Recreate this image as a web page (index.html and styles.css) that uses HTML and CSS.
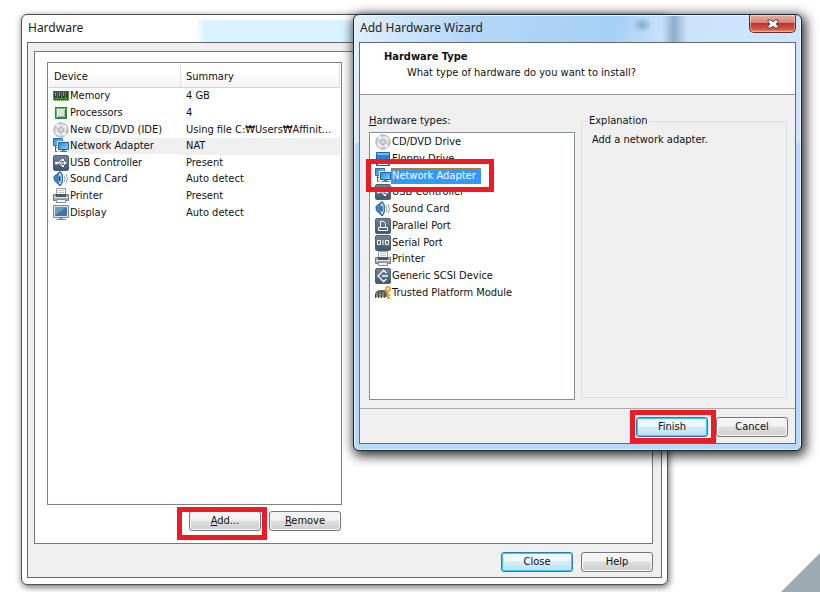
FILE: index.html
```html
<!DOCTYPE html>
<html lang="en">
  <head>
    <meta charset="UTF-8" />
    <meta name="viewport" content="width=device-width, initial-scale=1.0" />
    <title>Add Hardware Wizard</title>
    <link rel="stylesheet" href="styles.css">
  </head>
  <body>
    <svg class="sprite" aria-hidden="true">
      <defs>
        <linearGradient id="g-slate" x1="0" y1="0" x2="0" y2="1">
          <stop offset="0" stop-color="#71869a" />
          <stop offset="1" stop-color="#40566c" />
        </linearGradient>
        <linearGradient id="g-screen" x1="0" y1="0" x2="1" y2="1">
          <stop offset="0" stop-color="#2d83cf" />
          <stop offset="1" stop-color="#8bd0fa" />
        </linearGradient>
        <linearGradient id="g-disc" x1="0" y1="0" x2="1" y2="1">
          <stop offset="0" stop-color="#aeb4bd" />
          <stop offset="0.5" stop-color="#eef0f3" />
          <stop offset="1" stop-color="#a7adb6" />
        </linearGradient>
      </defs>
      <symbol id="memory" viewBox="0 0 16 16">
        <path fill="#35a046" d="M0 3h16v9h-1v1H1v-1H0z" />
        <path fill="#17722b" d="M0 3h16v1H0zM0 11h16v1H0z" />
        <path fill="#333b36" d="M1 4h3v6H1zM5 4h3v6H5zM9 4h3v6H9zM13 4h2v6h-2z" />
        <path fill="#8d9990" d="M2 4h1v4H2zM6 4h1v4H6zM10 4h1v4h-1z" />
        <path stroke="#b5d879" stroke-dasharray="1 1" d="M1 12.5h14" />
      </symbol>
      <symbol id="processor" viewBox="0 0 16 16">
        <path fill="#238944" d="M2 2h12v12H2z" />
        <path fill="#5abc69" d="M3 3h10v1H4v9H3z" />
        <path fill="#dcdfdd" d="M4 4h8v8H4z" />
        <path fill="#aeb7b1" d="M5 11h6V5h1v7H5z" />
        <path fill="#fff" d="M4 4h8v1H5v7H4z" />
      </symbol>
      <symbol id="disc" viewBox="0 0 16 16">
        <circle cx="8" cy="8" r="7.2" fill="url(#g-disc)" stroke="#979da7" stroke-width=".8" />
        <path fill="#fff" opacity=".75" d="M8 8 2 3l3-2zM8 8l6 4-3 3z" />
        <circle cx="8" cy="8" r="2.7" fill="#d4d8de" stroke="#929aa5" stroke-width=".7" />
        <circle cx="8" cy="8" r="1" fill="#fff" stroke="#9299a3" stroke-width=".4" />
      </symbol>
      <symbol id="network" viewBox="0 0 16 16">
        <path fill="url(#g-screen)" stroke="#2b6ca8" d="M.5.5h9v7h-9z" />
        <path fill="none" stroke="#2b6ca8" d="M2.5 8v5.500H5M3 9.500h2" />
        <path fill="#d8ebf8" d="M4 3h12v11H4z" />
        <path fill="url(#g-screen)" stroke="#1f64a3" d="M5.500 4.500h10v7h-10z" />
        <path fill="#4c7da5" d="M9 12h3v1h2v1H7v-1h2z" />
      </symbol>
      <symbol id="usb" viewBox="0 0 16 16">
        <rect x=".5" y=".5" width="15" height="15" rx="1.500" fill="url(#g-slate)" stroke="#4b6177" />
        <path fill="none" stroke="#fff" d="M3 8h9M5 8l3-3h2M7 8l2 3h1" />
        <circle cx="3.500" cy="8" r="1.500" fill="#fff" />
        <path fill="#fff" d="m11 6 3 2-3 2zM9 4h2v2H9zM9 10h2v2H9z" />
      </symbol>
      <symbol id="sound" viewBox="0 0 16 16">
        <path fill="#4588bd" stroke="#1b4c7c" stroke-width=".8" d="M1 6c0-1 1-2 2-2l4-3.500c2 1 2.500 4 2.500 7S9 14 7 15l-4-4C1.500 10.500 1 9 1 6z" />
        <ellipse cx="7" cy="7.700" rx="2.300" ry="6.500" fill="#a8d6f2" stroke="#24608f" stroke-width=".8" />
        <ellipse cx="6.500" cy="7.700" rx="1.100" ry="3" fill="#245581" />
        <path fill="none" stroke="#8da1b3" d="M11 4.500q2 3.200 0 6.500M13 3q3 4.700 0 9.500" />
      </symbol>
      <symbol id="printer" viewBox="0 0 16 16">
        <path fill="#fff" stroke="#9299a1" d="M3.500.5h9v6h-9z" />
        <path stroke="#c4cad1" d="M5 2.500h6M5 4.500h6" />
        <path fill="#a7acb4" stroke="#747b86" d="M.5 6.500h15v6H.5z" />
        <path fill="#50565f" d="M3 6h10v3H3z" />
        <path fill="#e3e5e9" d="M1 9h14v1H1z" />
        <path fill="#f6f7f8" stroke="#828993" d="M3.500 11.500h9v3h-9z" />
      </symbol>
      <symbol id="display" viewBox="0 0 16 16">
        <path fill="#dce5ed" stroke="#708ba2" d="M.5.5h15v12H.5z" />
        <path fill="#47749d" d="M2 2h12v9H2z" />
        <path fill="#7099bd" d="M2 2h12L2 10z" />
        <path fill="#8395a5" d="M6 13h4v1h3v1H3v-1h3z" />
      </symbol>
      <symbol id="floppy" viewBox="0 0 16 16">
        <path fill="#2b80cf" stroke="#1962ad" d="M1.500 1.500h13v13h-13z" />
        <path fill="#75bdf2" d="M2 2h12v2H2z" />
        <path fill="#f8fbfd" d="M3 8h10v6H3z" />
      </symbol>
      <symbol id="parallel" viewBox="0 0 16 16">
        <rect x=".5" y=".5" width="15" height="15" rx="1.500" fill="url(#g-slate)" stroke="#4b6177" />
        <path fill="none" stroke="#fff" d="M5.500 9.500v-6h3l2 2v4M3.500 9.500h9v3h-9z" />
      </symbol>
      <symbol id="serial" viewBox="0 0 16 16">
        <rect x=".5" y=".5" width="15" height="15" rx="1.500" fill="url(#g-slate)" stroke="#4b6177" />
        <path fill="none" stroke="#fff" d="M2.500 5.500h3v4h-3zM8 5v5M10.500 5.500h3v4h-3z" />
      </symbol>
      <symbol id="scsi" viewBox="0 0 16 16">
        <rect x=".5" y=".5" width="15" height="15" rx="1.500" fill="url(#g-slate)" stroke="#4b6177" />
        <path fill="none" stroke="#fff" stroke-width="1.300" d="m11.500 5-3-2.500L3 8l5.500 5.500 3-2.500M7 8h6" />
      </symbol>
      <symbol id="tpm" viewBox="0 0 16 16">
        <path fill="#6a6865" d="M0 9q1-4 5-4h5l2 3v4H0z" />
        <path stroke="#4b4947" d="M.5 9v4M3.500 8v5M6.500 8v5M9.500 8v5" />
        <path stroke="#aaa69f" d="M2 8.500v4M5 8v5M8 8v5" />
        <circle cx="13" cy="4" r="2.200" fill="#fff2bc" stroke="#e49b21" stroke-width="1.500" />
        <path fill="none" stroke="#df981c" stroke-width="1.500" d="M13 6v8M13 10h2.500M13 13h2.500" />
      </symbol>
    </svg>

    <div class="desktop">
      <main class="window hardware">
        <h1 class="title">Hardware</h1>
        <div class="client">
          <section class="panel">
            <div class="devices">
              <div class="device-list">
                <table>
                  <thead>
                    <tr><th>Device</th><th>Summary</th></tr>
                  </thead>
                  <tbody>
                    <tr><td><div class="device"><svg class="icon"><use href="#memory" /></svg><span>Memory</span></div></td><td>4 GB</td></tr>
                    <tr><td><div class="device"><svg class="icon"><use href="#processor" /></svg><span>Processors</span></div></td><td>4</td></tr>
                    <tr><td><div class="device"><svg class="icon"><use href="#disc" /></svg><span>New CD/DVD (IDE)</span></div></td><td>Using file C:₩Users₩Affinit...</td></tr>
                    <tr class="current"><td><div class="device"><svg class="icon"><use href="#network" /></svg><span>Network Adapter</span></div></td><td>NAT</td></tr>
                    <tr><td><div class="device"><svg class="icon"><use href="#usb" /></svg><span>USB Controller</span></div></td><td>Present</td></tr>
                    <tr><td><div class="device"><svg class="icon"><use href="#sound" /></svg><span>Sound Card</span></div></td><td>Auto detect</td></tr>
                    <tr><td><div class="device"><svg class="icon"><use href="#printer" /></svg><span>Printer</span></div></td><td>Present</td></tr>
                    <tr><td><div class="device"><svg class="icon"><use href="#display" /></svg><span>Display</span></div></td><td>Auto detect</td></tr>
                  </tbody>
                </table>
              </div>
              <div class="device-actions">
                <div class="marked mark-add"><button type="button" class="btn"><u>A</u>dd...</button></div>
                <button type="button" class="btn"><u>R</u>emove</button>
              </div>
            </div>
          </section>
          <div class="footer">
            <button type="button" class="btn primary">Close</button>
            <button type="button" class="btn">Help</button>
          </div>
        </div>
      </main>

      <section class="window wizard">
        <h2 class="title">Add Hardware Wizard</h2>
        <button type="button" class="close" aria-label="Close">
          <svg viewBox="0 0 12 10"><path d="M1 1h3l2 2 2-2h3v2L9 5l2 2v2H8L6 7 4 9H1V7l2-2-2-2z" /></svg>
        </button>
        <form class="client">
          <header class="intro">
            <h3>Hardware Type</h3>
            <p>What type of hardware do you want to install?</p>
          </header>
          <div class="choices">
            <div class="types">
              <span id="types-label" class="types-label"><u>H</u>ardware types:</span>
              <div class="type-list" role="radiogroup" aria-labelledby="types-label">
                <div class="type-rows">
                  <label><input type="radio" name="type"><svg class="icon"><use href="#disc" /></svg><span>CD/DVD Drive</span></label>
                  <label><input type="radio" name="type"><svg class="icon"><use href="#floppy" /></svg><span>Floppy Drive</span></label>
                  <label class="marked mark-type"><input type="radio" name="type" checked><svg class="icon"><use href="#network" /></svg><span>Network Adapter</span></label>
                  <label><input type="radio" name="type"><svg class="icon"><use href="#usb" /></svg><span>USB Controller</span></label>
                  <label><input type="radio" name="type"><svg class="icon"><use href="#sound" /></svg><span>Sound Card</span></label>
                  <label><input type="radio" name="type"><svg class="icon"><use href="#parallel" /></svg><span>Parallel Port</span></label>
                  <label><input type="radio" name="type"><svg class="icon"><use href="#serial" /></svg><span>Serial Port</span></label>
                  <label><input type="radio" name="type"><svg class="icon"><use href="#printer" /></svg><span>Printer</span></label>
                  <label><input type="radio" name="type"><svg class="icon"><use href="#scsi" /></svg><span>Generic SCSI Device</span></label>
                  <label><input type="radio" name="type"><svg class="icon"><use href="#tpm" /></svg><span>Trusted Platform Module</span></label>
                </div>
              </div>
            </div>
            <fieldset class="explanation">
              <legend>Explanation</legend>
              <p>Add a network adapter.</p>
            </fieldset>
          </div>
          <div class="footer">
            <div class="marked mark-finish"><button type="button" class="btn primary">Finish</button></div>
            <button type="button" class="btn">Cancel</button>
          </div>
        </form>
      </section>
      <div class="corner"></div>
    </div>
  </body>
</html>
```
FILE: styles.css
```css
* {
  box-sizing: border-box;
}

body {
  margin: 0;
  background: white;
  color: #111;
  font: 11px/16px "DejaVu Sans Condensed", "Noto Sans CJK KR", sans-serif;
}

h1,
h2,
h3,
p {
  margin: 0;
}

.sprite {
  position: absolute;
  width: 0;
  height: 0;
}

.desktop {
  position: relative;
  min-height: 100vh;
  overflow: hidden;
}

/* windows */
.window {
  position: absolute;
  display: flex;
  flex-direction: column;
  padding: 0 5px 6px;
  border: 1px solid #505356;
  border-radius: 6px;
}

.hardware {
  inset: 14px 152px 7px 21px;
  background: linear-gradient(90deg, transparent, #d9f3fe 8px) 174px 5px / 470px 22px no-repeat, white;
  box-shadow: 1px 2px 7px rgba(0, 0, 0, 0.6);
}

.wizard {
  inset: 14px 18px 141px 353px;
  border-color: #1d2935;
  background:
    radial-gradient(#86abcb, transparent 70%) 278px 2px / 20px 16px no-repeat,
    linear-gradient(90deg, transparent, #8eaeca 45%, transparent) 308px 1px / 26px 26px no-repeat,
    linear-gradient(100deg, #e2effc 0, #b4d7f8 25%, #a5d0f6 56%, #cce3fc 68%, #cfe5fc) 0 0 / 100% 128px no-repeat,
    #b5d8fb;
  box-shadow: inset 0 0 0 1px #e4f3ff, 2px 3px 12px 2px rgba(0, 0, 0, 0.8);
}

.title {
  height: 27px;
  padding: 0 1px;
  font: 12px/26px "Noto Sans", sans-serif;
  color: #222;
}

.client {
  flex: 1;
  display: flex;
  flex-direction: column;
  border: 1px solid #62686d;
  background: #efefef;
}

.hardware .client {
  padding: 8px 8px 5px 6px;
}

.close {
  position: absolute;
  top: 0;
  right: 5px;
  display: flex;
  justify-content: center;
  align-items: center;
  width: 47px;
  height: 18px;
  padding: 0;
  border: 1px solid #5b3037;
  border-top: none;
  border-radius: 0 0 5px 5px;
  background: linear-gradient(#e9b0a5, #d68376 45%, #bd3527 50%, #d2543f 80%, #e58b6d);
  box-shadow: inset 0 0 0 1px rgba(255, 255, 255, 0.4);
}

.close svg {
  width: 12px;
  height: 10px;
  fill: white;
  stroke: #4a4d58;
}

/* device list */
.panel {
  flex: 1;
  display: flex;
  padding: 10px 12px 12px;
  border: 1px solid #747783;
  background: white;
}

.devices {
  display: flex;
  flex-direction: column;
  gap: 6px;
  width: 295px;
}

.device-list {
  flex: 1;
  padding: 1px;
  border: 1px solid #7d828e;
}

table {
  width: 100%;
  height: 157px;
  border-collapse: separate;
  border-spacing: 0;
  table-layout: fixed;
}

th {
  height: 24px;
  padding: 2px 5px 0;
  border-right: 1px solid #dfe1e4;
  border-bottom: 1px solid #d5d5d5;
  background: linear-gradient(white 40%, #f2f3f5);
  text-align: left;
  font-weight: normal;
}

th:first-child {
  width: 132px;
}

td {
  padding: 0 0 0 5px;
  white-space: nowrap;
}

td:first-child {
  padding-left: 4px;
}

.device {
  display: flex;
  align-items: center;
  gap: 1px;
}

.current td + td,
.current span {
  background: #efefef;
}

.current span {
  flex: 1;
}

.icon {
  flex: none;
  width: 16px;
  height: 16px;
}

.device-actions {
  display: flex;
  justify-content: flex-end;
  gap: 8px;
  padding-right: 1px;
}

/* buttons */
.btn {
  width: 72px;
  height: 20px;
  padding: 0;
  border: 1px solid #777;
  border-radius: 3px;
  background: linear-gradient(#f3f3f3 45%, #dedede 50%, #cfcfcf);
  box-shadow: inset 0 0 0 1px #f7f7f7;
  color: #111;
  font: inherit;
  line-height: 16px;
}

.primary {
  border-color: #287fae;
  background: linear-gradient(#eef8fd 45%, #d3ebf7 50%, #c1e0f0);
  box-shadow: inset 0 0 0 1px #32cdf5;
}

.footer {
  display: flex;
  justify-content: flex-end;
  gap: 8px;
}

.hardware .footer {
  padding-top: 8px;
}

/* wizard */
.intro {
  height: 52px;
  padding: 6px 24px;
  border-bottom: 1px solid #999;
  background: white;
}

.intro h3 {
  font-size: 11px;
  line-height: 16px;
}

.intro p {
  padding-left: 23px;
}

.choices {
  flex: 1;
  display: grid;
  grid-template-columns: 1fr 1fr;
  gap: 6px;
  padding: 18px 8px 8px 9px;
}

.types {
  display: flex;
  flex-direction: column;
}

.types-label {
  height: 19px;
}

.type-list {
  flex: 1;
  padding: 1px 5px;
  border: 1px solid #888e99;
  background: white;
}

.type-rows {
  display: grid;
  grid-template-rows: repeat(10, 1fr);
  height: 167px;
}

.type-list label {
  display: flex;
  align-items: center;
}

.type-list input {
  appearance: none;
  width: 0;
  height: 0;
  margin: 0;
}

.type-list span {
  padding: 0 2px 0 1px;
}

.type-list input:checked ~ span {
  padding-right: 5px;
  background: #3399ff;
  color: white;
  outline: 1px dotted #bd742d;
  outline-offset: -1px;
}

.explanation {
  min-width: 0;
  margin: 0 0 2px;
  padding: 3px 10px;
  border: 1px solid #d4dfe8;
  border-radius: 3px;
}

.explanation legend {
  margin-left: -5px;
  padding: 0 2px;
}

.wizard .footer {
  padding: 8px 7px 6px;
  border-top: 1px solid #aaa;
}

/* red call-outs over the controls */
.marked {
  position: relative;
  display: flex;
}

.marked::after {
  content: "";
  position: absolute;
  z-index: 1;
  border: 5px solid #ed1c24;
  pointer-events: none;
}

.mark-add::after {
  inset: -4px -6px -9px -12px;
}

.mark-type::after {
  inset: -8px 75px -8px -9px;
}

.mark-finish::after {
  inset: -7px -8px -6px -6px;
}

.corner {
  position: absolute;
  right: 0;
  bottom: 0;
  width: 39px;
  height: 39px;
  background: #9eaab1;
  clip-path: polygon(100% 0, 100% 100%, 0 100%);
}
```
